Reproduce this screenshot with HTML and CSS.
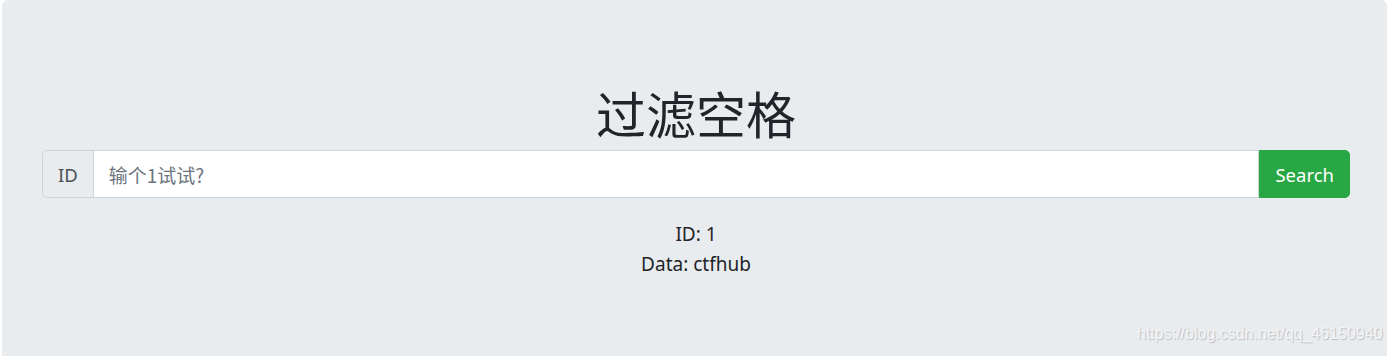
FILE: index.html
```html
<!DOCTYPE html>
<html lang="zh-CN">
<head>
<meta charset="utf-8">
<title>过滤空格</title>
<link rel="stylesheet" href="styles.css">
</head>
<body>
<div class="jumbotron">
  <h1 class="title">过滤空格</h1>
  <form class="input-group">
    <span class="addon">ID</span>
    <input class="field" type="text" name="id" placeholder="输个1试试?">
    <button class="btn" type="submit">Search</button>
  </form>
  <div class="result">
    <div>ID: 1</div>
    <div>Data: ctfhub</div>
  </div>
</div>
<div class="watermark">https://blog.csdn.net/qq_46150940</div>
</body>
</html>
```
FILE: styles.css
```css
html, body {
  margin: 0;
  padding: 0;
  background: #fff;
}
body {
  font-family: "Segoe UI", "Noto Sans", "Noto Sans CJK SC", sans-serif;
  color: #212529;
  position: relative;
}
.jumbotron {
  margin: 0 3px 0 2px;
  background: #e9ecef;
  border-radius: 6px 6px 0 0;
  padding: 80px 37px 0 40px;
  height: 356px;
  box-sizing: border-box;
}
.title {
  margin: 0 0 6px;
  text-align: center;
  font-size: 50px;
  font-weight: 400;
  line-height: 64px;
  color: #212529;
  font-family: "Noto Sans CJK SC", sans-serif;
}
.input-group {
  display: flex;
  height: 48px;
  margin: 0;
}
.addon {
  display: flex;
  align-items: center;
  padding: 0 15px;
  font-size: 18.5px;
  color: #495057;
  background: #e9ecef;
  border: 1px solid #ced4da;
  border-right: none;
  border-radius: 5px 0 0 5px;
}
.field {
  flex: 1;
  min-width: 0;
  padding: 0 15px;
  font-family: "Noto Sans CJK SC", "Noto Sans", sans-serif;
  font-size: 19px;
  color: #495057;
  background: #fff;
  border: 1px solid #ced4da;
  border-radius: 0;
  outline: none;
}
.field::placeholder {
  color: #6c757d;
}
.btn {
  padding: 0 15px;
  font-family: "Segoe UI", "Noto Sans", sans-serif;
  font-size: 18.5px;
  color: #fff;
  background: #28a745;
  border: 1px solid #28a745;
  border-radius: 0 5px 5px 0;
}
.result {
  margin-top: 21px;
  text-align: center;
  font-size: 19px;
  line-height: 30px;
}
.watermark {
  position: absolute;
  left: 1137px;
  top: 325px;
  font-family: "Liberation Sans", Arial, sans-serif;
  font-size: 16px;
  color: #f4f5f7;
  text-shadow: 1px 1px 1px #b9bcc0;
}
```
